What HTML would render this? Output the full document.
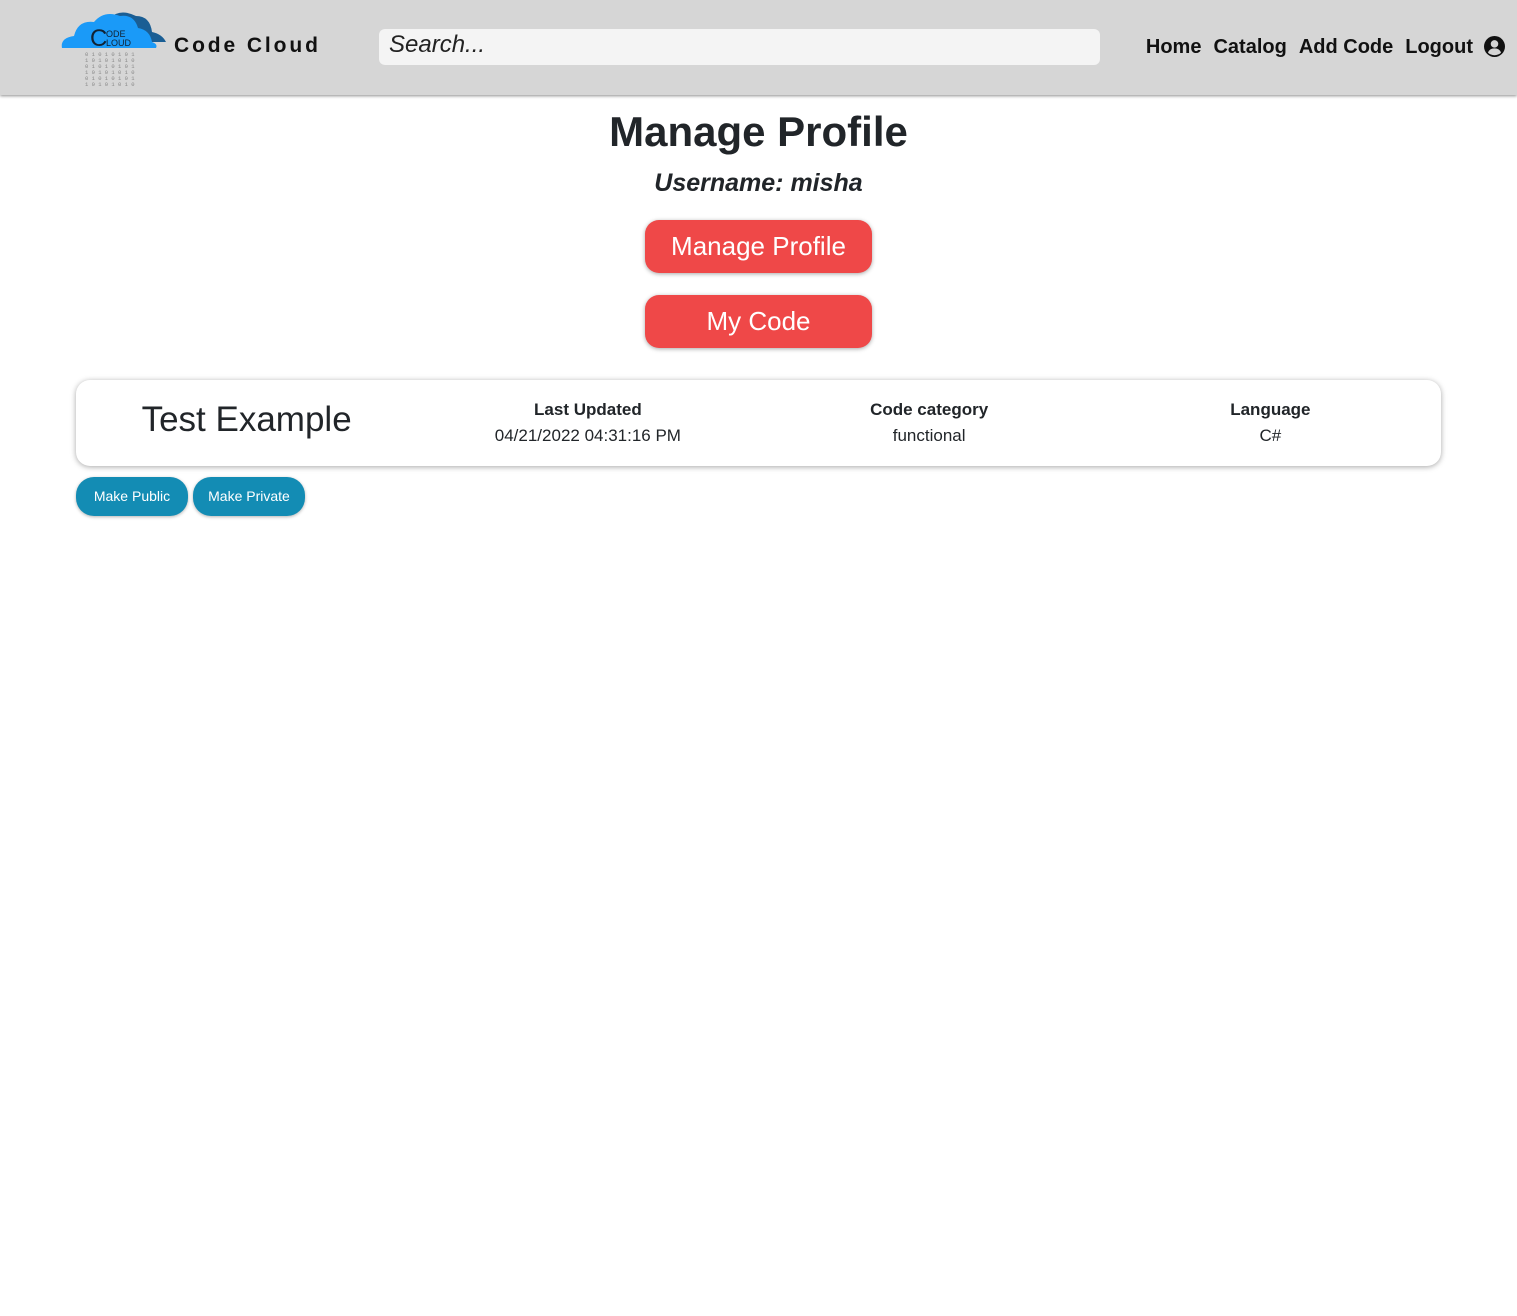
<!DOCTYPE html>
<html><head><meta charset="utf-8"><style>
*{box-sizing:border-box;margin:0;padding:0}
body{width:1517px;height:1316px;background:#fff;font-family:"Liberation Sans",sans-serif;color:#212529;position:relative;overflow:hidden}
.nav{position:absolute;left:0;top:0;width:1517px;height:95px;background:#d6d6d6;box-shadow:0 1px 3px rgba(0,0,0,.45)}
.brand{position:absolute;left:174px;top:34px;font-size:21px;font-weight:bold;letter-spacing:2.9px;color:#111}
.search{position:absolute;left:379px;top:29px;width:721px;height:36px;background:#f4f4f4;border-radius:6px;font-size:24px;font-style:italic;color:#222;padding:2px 10px}
.links{position:absolute;right:44px;top:36px;font-size:20px;font-weight:bold;color:#111}
.links span{margin-left:12px}
.user{position:absolute;left:1484px;top:36px}
h1{position:absolute;top:108px;width:100%;text-align:center;font-size:42px;font-weight:bold}
h2{position:absolute;top:169px;width:100%;text-align:center;font-size:25px;font-weight:bold;font-style:italic}
.rb{position:absolute;left:645px;width:227px;height:53px;background:#ef4848;border-radius:14px;color:#fff;font-size:26px;text-align:center;line-height:53px;box-shadow:0 1px 4px rgba(0,0,0,.35)}
.card{position:absolute;left:76px;top:380px;width:1365px;height:86px;border-radius:14px;background:#fff;box-shadow:0 1px 6px rgba(0,0,0,.35);display:flex}
.col{flex:1;text-align:center}
.t{font-size:35px;padding-top:20px}
.h{font-size:17px;font-weight:bold;padding-top:20px}
.v{font-size:17px;margin-top:6px}
.bb{position:absolute;top:477px;height:39px;background:#138cb4;border-radius:18px;color:#fff;font-size:14px;line-height:39px;text-align:center;box-shadow:0 1px 3px rgba(0,0,0,.3)}
</style></head><body>
<div class="nav">
<svg style="position:absolute;left:58px;top:8px" width="110" height="80" viewBox="0 0 110 80">
<path d="M30 34 Q30 12 52 10 Q62 0 78 8 Q92 8 94 24 Q104 26 108 34 Z" fill="#1a5e94"/>
<path d="M4 40 Q2 30 16 28 Q20 12 36 14 Q46 2 62 8 Q76 6 80 20 Q92 22 94 34 Q100 36 98 40 Z" fill="#1a9af8"/>
<text x="32" y="38" font-size="24" font-family="Liberation Sans" fill="#123">C</text>
<text x="48" y="29" font-size="9" font-family="Liberation Sans" fill="#123">ODE</text>
<text x="48" y="38" font-size="9" font-family="Liberation Sans" fill="#123">LOUD</text>
<g font-size="5.5" font-family="Liberation Mono" fill="#888">
<text x="27" y="48">0 1 0 1 0 1 0 1</text><text x="27" y="54">1 0 1 0 1 0 1 0</text><text x="27" y="60">0 1 0 1 0 1 0 1</text><text x="27" y="66">1 0 1 0 1 0 1 0</text><text x="27" y="72">0 1 0 1 0 1 0 1</text><text x="27" y="78">1 0 1 0 1 0 1 0</text></g>
</svg>
<div class="brand">Code Cloud</div>
<div class="search">Search...</div>
<div class="links"><span>Home</span><span>Catalog</span><span>Add Code</span><span>Logout</span></div>
<svg class="user" width="21" height="21" viewBox="0 0 20 20"><circle cx="10" cy="10" r="10" fill="#111"/><circle cx="10" cy="7.5" r="3.6" fill="#d6d6d6"/><path d="M3.8 16 Q5 11.8 10 11.8 Q15 11.8 16.2 16 Q13.6 18.3 10 18.3 Q6.4 18.3 3.8 16Z" fill="#d6d6d6"/></svg>
</div>
<h1>Manage Profile</h1>
<h2>Username: misha</h2>
<div class="rb" style="top:220px">Manage Profile</div>
<div class="rb" style="top:295px">My Code</div>
<div class="card">
<div class="col"><div class="t">Test Example</div></div>
<div class="col"><div class="h">Last Updated</div><div class="v">04/21/2022 04:31:16 PM</div></div>
<div class="col"><div class="h">Code category</div><div class="v">functional</div></div>
<div class="col"><div class="h">Language</div><div class="v">C#</div></div>
</div>
<div class="bb" style="left:76px;width:112px">Make Public</div>
<div class="bb" style="left:193px;width:112px">Make Private</div>
</body></html>
